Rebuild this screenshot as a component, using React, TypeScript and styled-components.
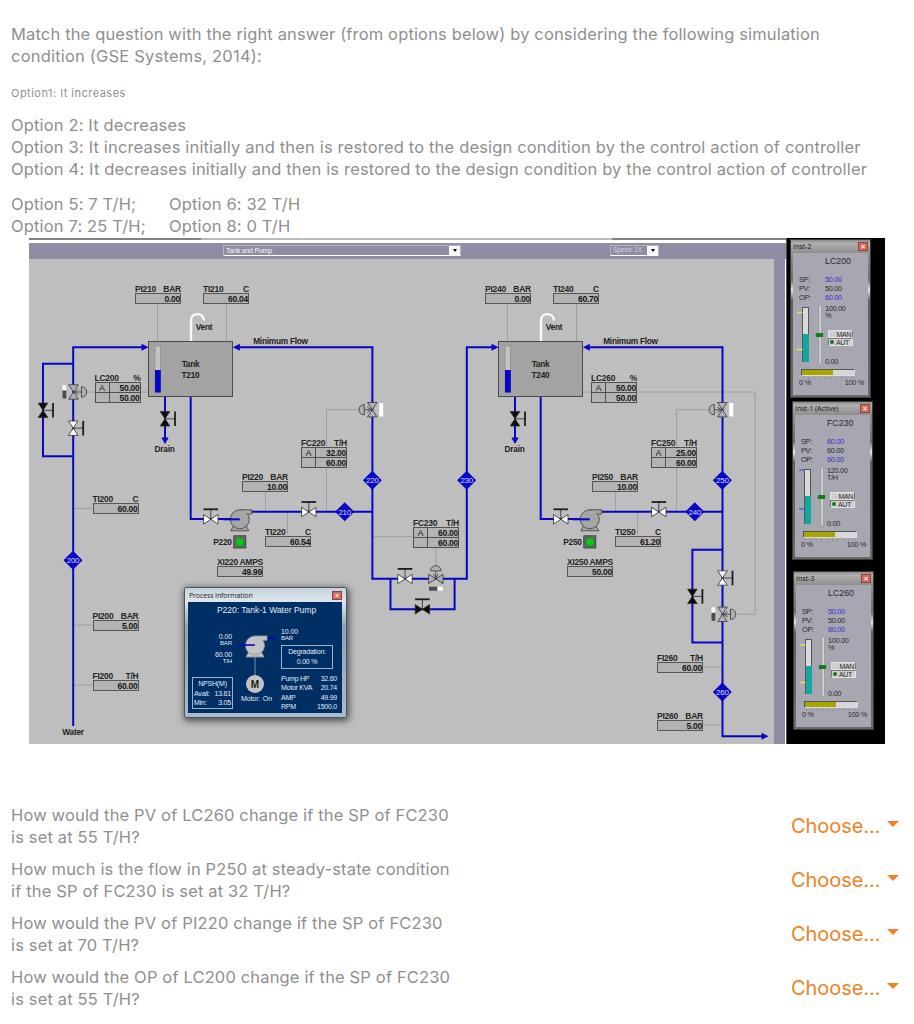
import React from "react";
import styled, { createGlobalStyle, css } from "styled-components";

const GlobalStyle = createGlobalStyle`
  * { box-sizing: border-box; }
  body { margin: 0; background: #fff; }
`;

const UI = '"Liberation Sans", Arial, sans-serif';
const BLUE = "#0606c4";

/* ---------- page ---------- */

const Page = styled.main`
  width: 914px;
  height: 1024px;
  overflow: hidden;
  padding: 23px 0 0 11px;
  background: #fff;
  color: #8f8f8f;
  font-family: Inter, sans-serif;
  font-size: 16.5px;
  line-height: 22px;
  letter-spacing: 0.15px;
`;

const Paragraph = styled.p<{ $gap?: number }>`
  margin: 0 0 ${(p) => p.$gap ?? 0}px;
`;

const Line = styled.span<{ $ls?: number }>`
  display: block;
  white-space: nowrap;
  letter-spacing: ${(p) => p.$ls ?? 0.15}px;
`;

const SmallParagraph = styled.p`
  margin: 0 0 10px;
  font-size: 11px;
  letter-spacing: 0.48px;
`;

const OptionGrid = styled.div`
  display: grid;
  grid-template-columns: 158px auto;
  justify-content: start;
  white-space: nowrap;
`;

/* ---------- simulator frame ---------- */

const Simulator = styled.section`
  display: flex;
  width: 856px;
  height: 506px;
  margin: 1px 0 60px 18px;
  font-family: ${UI};
  line-height: 1;
  letter-spacing: 0;
  color: #161616;
`;

const MainWindow = styled.div`
  width: 757px;
  display: flex;
  flex-direction: column;
`;

const TopEdge = styled.div`
  height: 5px;
  background: linear-gradient(90deg, #858085 172px, #bdbbc0 172px, #bdbbc0 583px, #858085 583px) 0 0 / 100% 2px
    no-repeat #fff;
`;

const ToolBar = styled.div`
  height: 16px;
  display: flex;
  align-items: flex-start;
  padding-top: 2px;
  background: #8f8da3;
  padding-left: 194px;
`;

const Combo = styled.div<{ $w: number; $ml?: number; $faint?: boolean }>`
  width: ${(p) => p.$w}px;
  height: 11px;
  margin-left: ${(p) => p.$ml ?? 0}px;
  padding-left: 2px;
  display: flex;
  align-items: center;
  justify-content: space-between;
  border: 1px solid #b3b2c1;
  border-bottom-color: #fff;
  color: ${(p) => (p.$faint ? "#d4d3df" : "#f4f4f8")};
  font-size: ${(p) => (p.$faint ? 6.6 : 7)}px;
  letter-spacing: -0.2px;
  white-space: nowrap;
`;

const ComboButton = styled.span`
  flex: none;
  width: 11px;
  height: 10px;
  background: #fbfbfb;
  display: grid;
  place-items: center;
  &::after {
    content: "";
    border: 2.5px solid transparent;
    border-top: 3px solid #000;
    border-bottom: 0;
  }
`;

const WindowBody = styled.div`
  flex: 1;
  display: flex;
  background: #8f8da3;
  border-right: 1px solid #fff;
`;

const Canvas = styled.div`
  position: relative;
  width: 745px;
  height: 485px;
  background: #bebebe;
  font-size: 8.5px;
  letter-spacing: -0.25px;
  font-weight: 700;
`;

const Drawing = styled.svg`
  display: block;
`;

/* ---------- readouts on the process canvas ---------- */

const Readout = styled.div<{ $x: number; $y: number }>`
  position: absolute;
  left: ${(p) => p.$x - 29}px;
  top: ${(p) => p.$y - 259 - 9}px;
  width: 46px;
`;

const ReadoutHead = styled.div`
  height: 9px;
  line-height: 10px;
  display: flex;
  justify-content: space-between;
  white-space: nowrap;
  font-weight: 700;
  color: #262626;
`;

const ReadoutValue = styled.div`
  height: 11px;
  border: 1px solid #565656;
  background: #b3b3b3;
  text-align: right;
  line-height: 10px;
`;

const ControllerGrid = styled.div`
  display: grid;
  grid-template-columns: 13px 1fr;
  grid-template-rows: 9px 9px;
  border: 1px solid #505050;
  background: #505050;
  gap: 1px;
  height: 21px;
  & > span {
    background: #b3b3b3;
    text-align: right;
    line-height: 10px;
    overflow: hidden;
  }
  & > span:first-child {
    text-align: center;
    font-weight: 400;
  }
`;

type Tag = { x: number; y: number; name: string; unit: string; value: string; sp?: string };

const tags: Tag[] = [
  { x: 135, y: 293, name: "PI210", unit: "BAR", value: "0.00" },
  { x: 203, y: 293, name: "TI210", unit: "C", value: "60.04" },
  { x: 485, y: 293, name: "PI240", unit: "BAR", value: "0.00" },
  { x: 553, y: 293, name: "TI240", unit: "C", value: "60.70" },
  { x: 92.5, y: 503, name: "TI200", unit: "C", value: "60.00" },
  { x: 92.5, y: 619.5, name: "PI200", unit: "BAR", value: "5.00" },
  { x: 92.5, y: 679.5, name: "FI200", unit: "T/H", value: "60.00" },
  { x: 242, y: 481, name: "PI220", unit: "BAR", value: "10.00" },
  { x: 265, y: 536, name: "TI220", unit: "C", value: "60.54" },
  { x: 217, y: 566, name: "XI220", unit: "AMPS", value: "49.99" },
  { x: 592, y: 481, name: "PI250", unit: "BAR", value: "10.00" },
  { x: 615, y: 536, name: "TI250", unit: "C", value: "61.20" },
  { x: 567, y: 566, name: "XI250", unit: "AMPS", value: "50.00" },
  { x: 657, y: 661.5, name: "FI260", unit: "T/H", value: "60.00" },
  { x: 657, y: 719.5, name: "PI260", unit: "BAR", value: "5.00" },
  { x: 94.5, y: 381.5, name: "LC200", unit: "%", value: "50.00", sp: "50.00" },
  { x: 301, y: 447, name: "FC220", unit: "T/H", value: "32.00", sp: "60.00" },
  { x: 591, y: 381.5, name: "LC260", unit: "%", value: "50.00", sp: "50.00" },
  { x: 651, y: 447, name: "FC250", unit: "T/H", value: "25.00", sp: "60.00" },
  { x: 413, y: 527, name: "FC230", unit: "T/H", value: "60.00", sp: "60.00" },
];

const TagReadout = ({ tag }: { tag: Tag }) => (
  <Readout $x={tag.x} $y={tag.y}>
    <ReadoutHead>
      <span>{tag.name}</span>
      <span>{tag.unit}</span>
    </ReadoutHead>
    {tag.sp ? (
      <ControllerGrid>
        <span>A</span>
        <span>{tag.value}</span>
        <span />
        <span>{tag.sp}</span>
      </ControllerGrid>
    ) : (
      <ReadoutValue>{tag.value}</ReadoutValue>
    )}
  </Readout>
);

/* ---------- drawing symbols ---------- */

/* Bow-tie valve; drawn upright with its handle to the right. */
const Valve = ({ x, y, fill, across }: { x: number; y: number; fill: string; across?: boolean }) => (
  <g transform={`translate(${x} ${y})${across ? " rotate(-90)" : ""}`}>
    <path d="M0 0H10" stroke="#444" strokeWidth="1" />
    <path d="M10 -7.3V7.3" stroke="#1c1c1c" strokeWidth="1.8" />
    <path d="M-4.8 -7.2H4.8L0 0L4.8 7.2H-4.8L0 0Z" fill={fill} stroke="#2e2e2e" strokeWidth="0.8" />
  </g>
);

const ControlValve = ({ x, y, turn = 0 }: { x: number; y: number; turn?: number }) => (
  <g transform={`translate(${x} ${y}) rotate(${turn})`} stroke="#444" strokeWidth="0.9" fill="#b0b0b0">
    <path d="M-4.8 -7.2H4.8L0 0L4.8 7.2H-4.8L0 0Z" />
    <path d="M0 0H8M1 0L5 -2.6M1 0L5 2.6" fill="none" />
    <path d="M8 -5.2V5.2C15 5.2 15 -5.2 8 -5.2Z" />
  </g>
);

const Diamond = ({ x, y, n }: { x: number; y: number; n: number }) => (
  <g>
    <path d={`M${x - 9.5} ${y}L${x} ${y - 9.5}L${x + 9.5} ${y}L${x} ${y + 9.5}Z`} fill={BLUE} />
    <text x={x} y={y + 2.8} textAnchor="middle" fill="#dcdcff" fontSize="8" fontWeight="400">
      {n}
    </text>
  </g>
);

const Pump = ({ x, y, light }: { x: number; y: number; light?: boolean }) => (
  <g stroke={light ? "#8d959c" : "#4a4a4a"} strokeWidth="0.9" fill={light ? "#c4c4c4" : "#a6a6a6"}>
    <path d={`M${x - 6} ${y + 6}L${x - 9} ${y + 11.5}H${x + 9}L${x + 6} ${y + 6}Z`} />
    <circle cx={x} cy={y} r="9.5" />
    <path d={`M${x} ${y - 9.5}H${x + 12}V${y - 5.3}H${x + 7}`} />
    <path d={`M${x - 17} ${y + (light ? -0.5 : 0)}H${x}`} stroke={BLUE} strokeWidth={light ? 1.6 : 2} />
  </g>
);

/* One tank with its pump; both trains share the same geometry. */
const Train = ({ dx, tank, pump }: { dx: number; tank: string; pump: string }) => (
  <g transform={`translate(${dx} 0)`}>
    <g stroke="#9c9c9c" strokeWidth="0.9" fill="none">
      <path d="M157.5 304V341M226.5 304V341" />
      <path d="M360 409.7H326.5V447M326.5 468V511M265.5 492V511M287.5 512V534" />
    </g>
    <g stroke={BLUE} strokeWidth="2" fill="none">
      <path d="M190.7 397V519H240M251 511.7H372.5M165 397V438M238 347.3H372.5" />
    </g>
    <path d="M191 341V320.5C191 312 203.5 312 204 320.5" fill="none" stroke="#fafafa" strokeWidth="2.4" />
    <rect x="148.5" y="341.5" width="84" height="55" fill="#a3a3a3" stroke="#4a4a4a" />
    <rect x="155" y="346" width="5.5" height="46" fill="#c2c2c2" stroke="#8a8a8a" strokeWidth="0.7" />
    <rect x="155" y="370" width="5.8" height="22.5" fill={BLUE} />
    <path d="M141.5 343.8L148.5 347.3L141.5 350.8Z" fill={BLUE} />
    <path d="M239.8 343.8L232.8 347.3L239.8 350.8Z" fill={BLUE} />
    <path d="M161.3 437.5H168.7L165 444Z" fill={BLUE} />
    <Valve x={165} y={418.8} fill="#0c0c0c" />
    <Valve x={210.8} y={519.3} fill="#fbfbfb" across />
    <Valve x={308.8} y={512} fill="#fbfbfb" across />
    <Pump x={239.8} y={519.3} />
    <ControlValve x={372.3} y={409.7} turn={180} />
    <rect x="379.2" y="403" width="4" height="13.5" fill="#fdfdfd" />
    <rect x="233.8" y="535.8" width="12" height="12.2" fill="#6b6b6b" stroke="#333" strokeWidth="0.8" />
    <circle cx="239.9" cy="542" r="4.4" fill="#0cc41a" stroke="#087010" strokeWidth="0.6" />
    <g textAnchor="middle">
      <text x="204" y="330">Vent</text>
      <text x="190.5" y="367">Tank</text>
      <text x="190.5" y="378">{tank}</text>
      <text x="164.6" y="452">Drain</text>
      <text x="280.5" y="343.8">Minimum Flow</text>
      <text x="222.5" y="545.3">{pump}</text>
    </g>
  </g>
);

const PositionBar = ({ x, y }: { x: number; y: number }) => (
  <g>
    <rect x={x} y={y} width="3.8" height="5.5" fill="#fbfbfb" />
    <rect x={x} y={y + 5.5} width="3.8" height="8" fill="#4c4c4c" />
  </g>
);

const ProcessDrawing = () => (
  <Drawing width="745" height="485" viewBox="29 259 745 485" fontFamily={UI} fontSize="8.3" fontWeight="700" fill="#222">
    <g stroke="#9c9c9c" strokeWidth="0.9" fill="none">
      <path d="M86 392H148M74 508.5H92M74 625H92M74 685H92" />
      <path d="M373 536.7H413M436 548V567M583 392H755.3V614.3H735M703 667H722M703 725H722" />
    </g>
    <g stroke={BLUE} strokeWidth="2" fill="none">
      <path d="M73.2 726V347.3H143M73.2 363.7H43V456.3H73.2" />
      <path d="M372.4 346.2V578.7H466.8V347.3H493M390.5 578.7V609.2H454.6V578.7" />
      <path d="M722.5 346.2V736.2H763M722.5 549.7H692.4V642.4H722.5" />
    </g>
    <path d="M761.5 732.7L768.5 736.2L761.5 739.7Z" fill={BLUE} />
    <Train dx={0} tank="T210" pump="P220" />
    <Train dx={350} tank="T240" pump="P250" />
    <ControlValve x={73.5} y={392} />
    <PositionBar x={62.5} y={385} />
    <Valve x={43} y={410.3} fill="#0c0c0c" />
    <Valve x={73.2} y={428.2} fill="#fbfbfb" />
    <Valve x={405} y={578.9} fill="#fbfbfb" across />
    <ControlValve x={435.8} y={578.9} turn={-90} />
    <rect x="429" y="586.7" width="8.5" height="4" fill="#4c4c4c" />
    <rect x="437.5" y="586.7" width="5.5" height="4" fill="#fbfbfb" />
    <Valve x={422.4} y={609.3} fill="#0c0c0c" across />
    <Valve x={722.5} y={578} fill="#fbfbfb" />
    <Valve x={692.4} y={596.4} fill="#0c0c0c" />
    <ControlValve x={722.5} y={614.3} />
    <PositionBar x={711.5} y={607.3} />
    <Diamond x={73} y={560.3} n={200} />
    <Diamond x={344.7} y={511.7} n={210} />
    <Diamond x={372.3} y={480.3} n={220} />
    <Diamond x={466.7} y={480.3} n={230} />
    <Diamond x={694.8} y={511.7} n={240} />
    <Diamond x={722.3} y={480.3} n={250} />
    <Diamond x={722.3} y={692} n={260} />
    <text x="73" y="734.5" textAnchor="middle">
      Water
    </text>
  </Drawing>
);

/* ---------- process information dialog ---------- */

const Dialog = styled.div`
  position: absolute;
  left: 155px;
  top: 328px;
  width: 163px;
  height: 131px;
  padding: 0 4px 4px 3px;
  border: 1px solid #4b5560;
  border-radius: 2px;
  background: linear-gradient(#c6d2dc, #dfe8ef 14px, #8fa3b4 40px, #a9bccb);
  box-shadow: 1px 2px 7px 1px rgba(0, 0, 0, 0.6);
  font-weight: 400;
  letter-spacing: 0;
`;

const DialogTitle = styled.div`
  height: 14px;
  display: flex;
  align-items: center;
  justify-content: space-between;
  font-family: "Open Sans", sans-serif;
  font-size: 7px;
  letter-spacing: -0.12px;
  padding-left: 1px;
  color: #222;
`;

const CloseButton = styled.span`
  width: 10px;
  height: 9px;
  display: grid;
  place-items: center;
  border: 1px solid #8f4438;
  background: #d9695b;
  color: #fff;
  font: 700 7px/1 ${UI};
`;

const DialogBody = styled.div`
  position: relative;
  height: 111px;
  background: #002f66;
  color: #e3ebf5;
  font-size: 7px;
`;

const BodyHeading = styled.div`
  padding-left: 3px;
  text-align: center;
  font-size: 8.5px;
  line-height: 16px;
  white-space: nowrap;
`;

const DialogDrawing = styled.svg`
  position: absolute;
  inset: 0;
`;

const FlowValue = styled.div<{ $x: number; $y: number; $right?: boolean }>`
  position: absolute;
  left: ${(p) => p.$x}px;
  top: ${(p) => p.$y}px;
  width: 24px;
  text-align: ${(p) => (p.$right ? "right" : "left")};
  line-height: 7px;
  letter-spacing: -0.1px;
  & > small {
    display: block;
    font-size: 6px;
  }
`;

const OutlineBox = styled.div<{ $x: number; $y: number; $w: number; $h: number }>`
  position: absolute;
  left: ${(p) => p.$x}px;
  top: ${(p) => p.$y}px;
  width: ${(p) => p.$w}px;
  height: ${(p) => p.$h}px;
  border: 1px solid #9fb2c8;
  padding: 1px 1px 0;
  text-align: center;
  line-height: 9.6px;
  letter-spacing: -0.2px;
`;

const Pair = styled.div<{ $h?: number }>`
  display: flex;
  justify-content: space-between;
  line-height: ${(p) => p.$h ?? 9.6}px;
  white-space: nowrap;
`;

const MotorTable = styled.div`
  position: absolute;
  left: 93px;
  top: 71.5px;
  width: 56px;
  letter-spacing: -0.25px;
`;

const MotorLabel = styled.div`
  position: absolute;
  left: 53px;
  top: 93px;
  width: 31px;
  display: flex;
  justify-content: space-between;
  letter-spacing: -0.1px;
`;

const motorRows = [
  ["Pump HP", "32.60"],
  ["Motor KVA", "20.74"],
  ["AMP", "49.99"],
  ["RPM", "1500.0"],
];

const ProcessDialog = () => (
  <Dialog>
    <DialogTitle>
      Process Information
      <CloseButton>×</CloseButton>
    </DialogTitle>
    <DialogBody>
      <BodyHeading>P220: Tank-1 Water Pump</BodyHeading>
      <DialogDrawing width="155" height="111">
        <path d="M67 54V78" stroke="#7d8fa3" />
        <path d="M76 36.2H88" stroke={BLUE} strokeWidth="1.8" />
        <Pump x={67} y={43.5} light />
        <circle cx="67" cy="82" r="9" fill="#c4c4c4" />
        <text x="67" y="85.5" textAnchor="middle" fontFamily={UI} fontSize="10" fontWeight="700" fill="#1c1c1c">
          M
        </text>
      </DialogDrawing>
      <FlowValue $x={20} $y={31} $right>
        0.00<small>BAR</small>
      </FlowValue>
      <FlowValue $x={20} $y={49} $right>
        60.00<small>T/H</small>
      </FlowValue>
      <FlowValue $x={93} $y={26}>
        10.00<small>BAR</small>
      </FlowValue>
      <OutlineBox $x={93} $y={43} $w={52} $h={24}>
        Degradation:
        <br />
        0.00 %
      </OutlineBox>
      <OutlineBox $x={4} $y={75} $w={41} $h={32}>
        NPSH(M)
        <Pair>
          <span>Avail:</span>
          <span>13.61</span>
        </Pair>
        <Pair>
          <span>Min:</span>
          <span>3.05</span>
        </Pair>
      </OutlineBox>
      <MotorLabel>
        <span>Motor:</span>
        <span>On</span>
      </MotorLabel>
      <MotorTable>
        {motorRows.map(([k, v]) => (
          <Pair key={k} $h={9.6}>
            <span>{k}</span>
            <span>{v}</span>
          </Pair>
        ))}
      </MotorTable>
    </DialogBody>
  </Dialog>
);

/* ---------- instrument rail ---------- */

const Rail = styled.aside`
  width: 99px;
  background: #000;
  border-left: 1px solid #55545c;
  padding: 1px 0 0 3px;
  display: flex;
  flex-direction: column;
  gap: 3px;
`;

const Instrument = styled.div<{ $ml: number; $mt?: number }>`
  width: 81px;
  height: 159px;
  margin: ${(p) => p.$mt ?? 0}px 0 0 ${(p) => p.$ml}px;
  padding: 0 2px 2px;
  border: 1px solid #3c3c3c;
  background: linear-gradient(#8a8a8a, #b0b0b0 3px, #8e8e8e 13px, #6d6d6d 40px, #e8e8e8 50px, #626262 60px, #6a6a6a);
`;

const InstrumentTitle = styled.div`
  height: 13px;
  display: flex;
  align-items: center;
  justify-content: space-between;
  font-family: "Open Sans", sans-serif;
  font-size: 7.3px;
  letter-spacing: -0.15px;
  color: #1a1a1a;
  white-space: nowrap;
`;

const InstrumentBody = styled.div`
  height: 142px;
  background: #a7a7b1;
  padding: 4px 0 0 6px;
  font-size: 7.4px;
  letter-spacing: -0.35px;
  color: #2c2c2c;
`;

const InstrumentName = styled.div`
  padding-left: 26px;
  font-size: 8.8px;
  line-height: 9px;
  letter-spacing: 0;
  margin-bottom: 9px;
`;

const ParamRow = styled.div<{ $set?: boolean }>`
  display: grid;
  grid-template-columns: 26px 1fr;
  line-height: 9px;
  & > span:last-child {
    color: ${(p) => (p.$set ? "#3a30d0" : "#2c2c2c")};
  }
`;

const GaugeRow = styled.div`
  display: flex;
  height: 62px;
  margin-top: 1px;
`;

const GaugeDrawing = styled.svg`
  flex: none;
  overflow: visible;
`;

const GaugeSide = styled.div`
  display: flex;
  flex-direction: column;
  justify-content: space-between;
  padding-top: 2px;
  line-height: 7px;
`;

const ModeButtons = styled.div`
  width: 25px;
  margin: 6px 0 7px 3px;
  display: flex;
  flex-direction: column;
`;

const ModeButton = styled.span<{ $on?: boolean }>`
  height: 8px;
  display: flex;
  align-items: center;
  justify-content: flex-end;
  gap: 2px;
  padding-right: ${(p) => (p.$on ? 3 : 1)}px;
  background: #cfcfcf;
  border: 1px solid #e3e3e3;
  border-right-color: #777;
  font-size: 7px;
  ${(p) =>
    p.$on &&
    css`
      border-color: #777 #e3e3e3 #e3e3e3 #777;
      &::before {
        content: "";
        flex: none;
        width: 4px;
        height: 4px;
        border-radius: 2px;
        background: #127a1c;
      }
    `}
`;

const OutputBar = styled.div`
  width: 54px;
  height: 7px;
  margin: 4px 0 1px 2px;
  border: 1px solid #555;
  border-right-color: #ddd;
  border-bottom-color: #ddd;
  background: linear-gradient(90deg, #a8a400 60%, #d6d6d6 60%);
`;

const ScaleTicks = styled.div`
  width: 50px;
  height: 2px;
  margin-left: 4px;
  background: repeating-linear-gradient(90deg, #8b8b95 0 1px, transparent 1px 5.4px);
`;

const ScaleRow = styled.div`
  width: 65px;
  display: flex;
  justify-content: space-between;
  line-height: 8px;
`;

type Inst = { title: string; name: string; sp: string; top: string; unit: string; mark: string; marks: [number, number] };

const InstrumentPanel = ({ inst, ml, mt }: { inst: Inst; ml: number; mt?: number }) => (
  <Instrument $ml={ml} $mt={mt}>
    <InstrumentTitle>
      {inst.title}
      <CloseButton>×</CloseButton>
    </InstrumentTitle>
    <InstrumentBody>
      <InstrumentName>{inst.name}</InstrumentName>
      <ParamRow $set>
        <span>SP:</span>
        <span>{inst.sp}</span>
      </ParamRow>
      <ParamRow>
        <span>PV:</span>
        <span>{inst.sp}</span>
      </ParamRow>
      <ParamRow $set>
        <span>OP:</span>
        <span>60.00</span>
      </ParamRow>
      <GaugeRow>
        <GaugeDrawing width="26" height="62" viewBox="-1 0 26 62">
          <rect x="2.5" y="4.5" width="6" height="54" fill="#dadada" stroke="#555" strokeWidth="1" />
          <rect x="3" y="31" width="6" height="28" fill="#12a8a0" />
          <path d="M11 6V60" stroke="#b98c96" strokeWidth="2" strokeDasharray="0.8 4.6" />
          <path d={`M-3 ${inst.marks[0]}H2.5M-3 ${inst.marks[1]}H2.5`} stroke={inst.mark} strokeWidth="1.3" />
          <rect x="19" y="2" width="2.4" height="59" fill="#d4d4d4" stroke="#888" strokeWidth="0.5" />
          <rect x="15.8" y="30" width="7.4" height="4" rx="1" fill="#117d17" />
        </GaugeDrawing>
        <GaugeSide>
          <div>
            {inst.top}
            <br />
            {inst.unit}
          </div>
          <ModeButtons>
            <ModeButton>MAN</ModeButton>
            <ModeButton $on>AUT</ModeButton>
          </ModeButtons>
          <div>0.00</div>
        </GaugeSide>
      </GaugeRow>
      <OutputBar />
      <ScaleTicks />
      <ScaleRow>
        <span>0 %</span>
        <span>100 %</span>
      </ScaleRow>
    </InstrumentBody>
  </Instrument>
);

/* ---------- questions ---------- */

const QuestionList = styled.div`
  display: flex;
  flex-direction: column;
`;

const Question = styled.div`
  height: 54px;
  display: flex;
  justify-content: space-between;
  padding-right: 15px;
`;

const Choice = styled.button`
  width: 108px;
  height: 44px;
  padding: 0;
  border: 0;
  background: none;
  display: flex;
  align-items: center;
  justify-content: space-between;
  color: #ec8324;
  font: 400 20px/44px Inter, sans-serif;
  letter-spacing: -0.05px;
  &::after {
    content: "";
    margin-top: -4px;
    border: 6px solid transparent;
    border-top: 6px solid #ec8324;
    border-bottom: 0;
  }
`;

const questions = [
  ["How would the PV of LC260 change if the SP of FC230", "is set at 55 T/H?"],
  ["How much is the flow in P250 at steady-state condition", "if the SP of FC230 is set at 32 T/H?"],
  ["How would the PV of PI220 change if the SP of FC230", "is set at 70 T/H?"],
  ["How would the OP of LC200 change if the SP of FC230", "is set at 55 T/H?"],
];

export default function App() {
  return (
    <Page>
      <GlobalStyle />
      <Paragraph $gap={15}>
        <Line>Match the question with the right answer (from options below) by considering the following simulation</Line>
        <Line $ls={0.2}>condition (GSE Systems, 2014):</Line>
      </Paragraph>
      <SmallParagraph>Option1: It increases</SmallParagraph>
      <Paragraph $gap={13}>
        <Line>Option 2: It decreases</Line>
        <Line $ls={0.165}>Option 3: It increases initially and then is restored to the design condition by the control action of controller</Line>
        <Line $ls={0.165}>Option 4: It decreases initially and then is restored to the design condition by the control action of controller</Line>
      </Paragraph>
      <OptionGrid>
        <span>Option 5: 7 T/H;</span>
        <span>Option 6: 32 T/H</span>
        <span>Option 7: 25 T/H;</span>
        <span>Option 8: 0 T/H</span>
      </OptionGrid>

      <Simulator>
        <MainWindow>
          <TopEdge />
          <ToolBar>
            <Combo $w={238}>
              Tank and Pump
              <ComboButton />
            </Combo>
            <Combo $w={49} $ml={149} $faint>
              Speed: 1X
              <ComboButton />
            </Combo>
          </ToolBar>
          <WindowBody>
            <Canvas>
              <ProcessDrawing />
              {tags.map((t) => (
                <TagReadout key={t.name} tag={t} />
              ))}
              <ProcessDialog />
            </Canvas>
          </WindowBody>
        </MainWindow>
        <Rail>
          <InstrumentPanel
            ml={0}
            inst={{ title: "Inst-2", name: "LC200", sp: "50.00", top: "100.00", unit: "%", mark: "#e8e04a", marks: [9.5, 46.5] }}
          />
          <InstrumentPanel
            ml={2}
            inst={{ title: "Inst-1 (Active)", name: "FC230", sp: "60.00", top: "120.00", unit: "T/H", mark: "#3d6fd6", marks: [5, 44] }}
          />
          <InstrumentPanel
            ml={3}
            mt={8}
            inst={{ title: "Inst-3", name: "LC260", sp: "50.00", top: "100.00", unit: "%", mark: "#e8e04a", marks: [10, 47.5] }}
          />
        </Rail>
      </Simulator>

      <QuestionList>
        {questions.map(([a, b]) => (
          <Question key={a}>
            <Paragraph>
              <Line>{a}</Line>
              <Line>{b}</Line>
            </Paragraph>
            <Choice>Choose...</Choice>
          </Question>
        ))}
      </QuestionList>
    </Page>
  );
}
